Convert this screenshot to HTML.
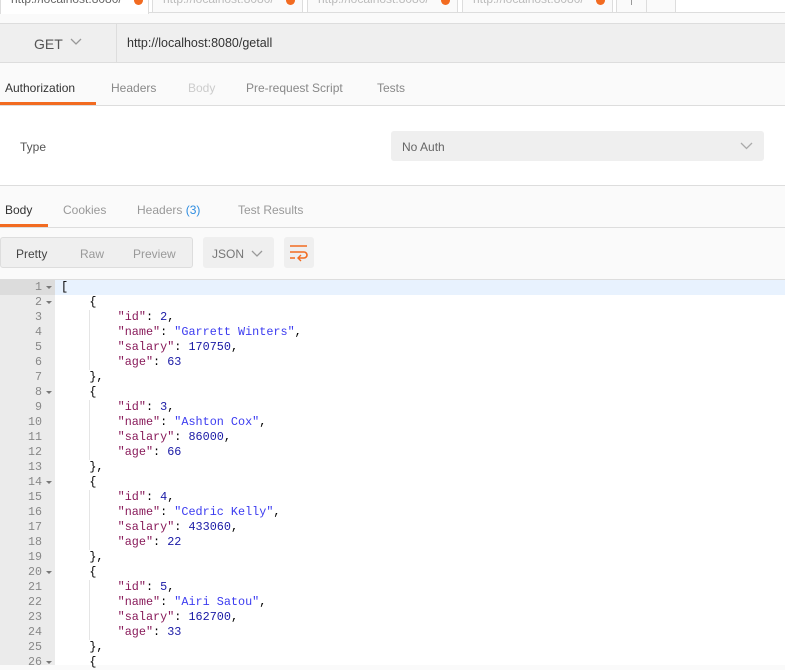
<!DOCTYPE html>
<html><head><style>
*{margin:0;padding:0;box-sizing:border-box}
body{width:785px;height:665px;overflow:hidden;background:#fafafa;font-family:"Liberation Sans",sans-serif;font-size:12px;color:#505050;position:relative}
.a{position:absolute}
.tab{position:absolute;top:0;height:13px;background:#fafafa;border:1px solid #ddd;border-top:none;overflow:hidden}
.tt{position:absolute;left:10px;top:-8px;font-size:12px;color:#bbb}
.dot{position:absolute;top:-4px;width:9px;height:9px;border-radius:50%;background:#f26b21}
.code{font-family:"Liberation Mono",monospace;font-size:11.8px;line-height:15px;white-space:pre;color:#000}
.k{color:#881a5a}.s{color:#3b3bf0}.n{color:#1a1aa6}
.num{position:absolute;left:0;width:42px;text-align:right;font-family:"Liberation Mono",monospace;font-size:11.66px;color:#888;line-height:15px}
.fold{position:absolute;left:46px;width:0;height:0;border-left:3px solid transparent;border-right:3px solid transparent;border-top:3px solid #777}
</style></head><body>
<div class="a" style="left:0;top:0;width:785px;height:13px;background:#fff;border-bottom:1px solid #ddd"></div>
<div class="tab" style="left:0;width:149px;background:#fff;border-bottom:none;height:14px"><div class="tt" style="color:#666">http://localhost:8080/</div><div class="dot" style="left:133px"></div></div>
<div class="tab" style="left:152px;width:151px"><div class="tt">http://localhost:8080/</div><div class="dot" style="left:133px"></div></div>
<div class="tab" style="left:307px;width:151px"><div class="tt">http://localhost:8080/</div><div class="dot" style="left:133px"></div></div>
<div class="tab" style="left:462px;width:151px"><div class="tt">http://localhost:8080/</div><div class="dot" style="left:133px"></div></div>
<div class="tab" style="left:616px;width:31px"><div class="a" style="left:14px;top:0;width:1px;height:5px;background:#999"></div></div>
<div class="tab" style="left:646px;width:30px"></div>

<div class="a" style="left:0;top:23px;width:785px;height:40px;background:#efefef;border-top:1px solid #ddd;border-bottom:1px solid #ddd"></div>
<div class="a" style="left:116px;top:24px;width:1px;height:38px;background:#ddd"></div>
<div class="a" style="left:34px;top:36px;font-size:14px;color:#555">GET</div>
<svg class="a" style="left:70px;top:38px" width="12" height="8"><path d="M1 1l5 5 5-5" stroke="#999" fill="none" stroke-width="1.3"/></svg>
<div class="a" style="left:127px;top:36px;font-size:12.5px;color:#333">http://localhost:8080/getall</div>

<div class="a" style="left:5px;top:81px;color:#333">Authorization</div>
<div class="a" style="left:111px;top:81px;color:#888">Headers</div>
<div class="a" style="left:188px;top:81px;color:#ccc">Body</div>
<div class="a" style="left:246px;top:81px;color:#888">Pre-request Script</div>
<div class="a" style="left:377px;top:81px;color:#888">Tests</div>
<div class="a" style="left:0;top:102px;width:96px;height:3px;background:#f26b21"></div>
<div class="a" style="left:0;top:105px;width:785px;height:81px;background:#fff;border-top:1px solid #ddd;border-bottom:1px solid #ddd"></div>
<div class="a" style="left:20px;top:140px;color:#555">Type</div>
<div class="a" style="left:391px;top:131px;width:373px;height:30px;background:#efefef;border-radius:3px"></div>
<div class="a" style="left:402px;top:140px;color:#666">No Auth</div>
<svg class="a" style="left:740px;top:142px" width="13" height="8"><path d="M1 1l5.5 5.5 5.5-5.5" stroke="#aaa" fill="none" stroke-width="1.3"/></svg>

<div class="a" style="left:5px;top:203px;color:#333">Body</div>
<div class="a" style="left:63px;top:203px;color:#999">Cookies</div>
<div class="a" style="left:137px;top:203px;color:#999">Headers <span style="color:#2f8de0">(3)</span></div>
<div class="a" style="left:238px;top:203px;color:#999">Test Results</div>
<div class="a" style="left:0;top:224px;width:48px;height:3px;background:#f26b21"></div>
<div class="a" style="left:0;top:227px;width:785px;height:1px;background:#ddd"></div>

<div class="a" style="left:0;top:237px;width:193px;height:31px;background:#efefef;border:1px solid #ddd;border-radius:3px"></div>
<div class="a" style="left:16px;top:247px;color:#444">Pretty</div>
<div class="a" style="left:80px;top:247px;color:#999">Raw</div>
<div class="a" style="left:133px;top:247px;color:#999">Preview</div>
<div class="a" style="left:203px;top:237px;width:71px;height:31px;background:#efefef;border-radius:3px"></div>
<div class="a" style="left:212px;top:247px;color:#777">JSON</div>
<svg class="a" style="left:251px;top:250px" width="12" height="8"><path d="M1 1l5 5 5-5" stroke="#999" fill="none" stroke-width="1.3"/></svg>
<div class="a" style="left:284px;top:237px;width:30px;height:31px;background:#efefef;border-radius:3px"></div>
<svg class="a" style="left:289px;top:244px" width="20" height="18"><path d="M1 2h17M1 8h14a3 3 0 0 1 0 6h-5M1 14h5" stroke="#f26b21" fill="none" stroke-width="1.6"/><path d="M12 11l-3 3 3 3" stroke="#f26b21" fill="none" stroke-width="1.4"/></svg>

<div class="a" style="left:0;top:279px;width:785px;height:386px;background:#fff;border-top:1px solid #ddd"></div>
<div class="a" style="left:0;top:280px;width:55px;height:385px;background:#ebebeb"></div>
<div class="a" style="left:0;top:280px;width:55px;height:15px;background:#dcdcdc"></div>
<div class="a" style="left:55px;top:280px;width:730px;height:15px;background:#e8f2fe"></div>
<div class="a code" style="left:61px;top:280px">[
    {
        <span class="k">"id"</span>: <span class="n">2</span>,
        <span class="k">"name"</span>: <span class="s">"Garrett Winters"</span>,
        <span class="k">"salary"</span>: <span class="n">170750</span>,
        <span class="k">"age"</span>: <span class="n">63</span>
    },
    {
        <span class="k">"id"</span>: <span class="n">3</span>,
        <span class="k">"name"</span>: <span class="s">"Ashton Cox"</span>,
        <span class="k">"salary"</span>: <span class="n">86000</span>,
        <span class="k">"age"</span>: <span class="n">66</span>
    },
    {
        <span class="k">"id"</span>: <span class="n">4</span>,
        <span class="k">"name"</span>: <span class="s">"Cedric Kelly"</span>,
        <span class="k">"salary"</span>: <span class="n">433060</span>,
        <span class="k">"age"</span>: <span class="n">22</span>
    },
    {
        <span class="k">"id"</span>: <span class="n">5</span>,
        <span class="k">"name"</span>: <span class="s">"Airi Satou"</span>,
        <span class="k">"salary"</span>: <span class="n">162700</span>,
        <span class="k">"age"</span>: <span class="n">33</span>
    },
    {</div>
<div class="a" style="left:0;top:280px">
<div class="num" style="top:0">1</div><div class="num" style="top:15px">2</div><div class="num" style="top:30px">3</div><div class="num" style="top:45px">4</div><div class="num" style="top:60px">5</div><div class="num" style="top:75px">6</div><div class="num" style="top:90px">7</div><div class="num" style="top:105px">8</div><div class="num" style="top:120px">9</div><div class="num" style="top:135px">10</div><div class="num" style="top:150px">11</div><div class="num" style="top:165px">12</div><div class="num" style="top:180px">13</div><div class="num" style="top:195px">14</div><div class="num" style="top:210px">15</div><div class="num" style="top:225px">16</div><div class="num" style="top:240px">17</div><div class="num" style="top:255px">18</div><div class="num" style="top:270px">19</div><div class="num" style="top:285px">20</div><div class="num" style="top:300px">21</div><div class="num" style="top:315px">22</div><div class="num" style="top:330px">23</div><div class="num" style="top:345px">24</div><div class="num" style="top:360px">25</div><div class="num" style="top:375px">26</div>
<div class="fold" style="top:6px"></div><div class="fold" style="top:21px"></div><div class="fold" style="top:111px"></div><div class="fold" style="top:201px"></div><div class="fold" style="top:291px"></div><div class="fold" style="top:381px"></div>
</div>
<div class="a" style="left:89px;top:310px;width:1px;height:60px;background:#e5e5e5"></div>
<div class="a" style="left:89px;top:400px;width:1px;height:60px;background:#e5e5e5"></div>
<div class="a" style="left:89px;top:490px;width:1px;height:60px;background:#e5e5e5"></div>
<div class="a" style="left:89px;top:580px;width:1px;height:60px;background:#e5e5e5"></div>
</body></html>
